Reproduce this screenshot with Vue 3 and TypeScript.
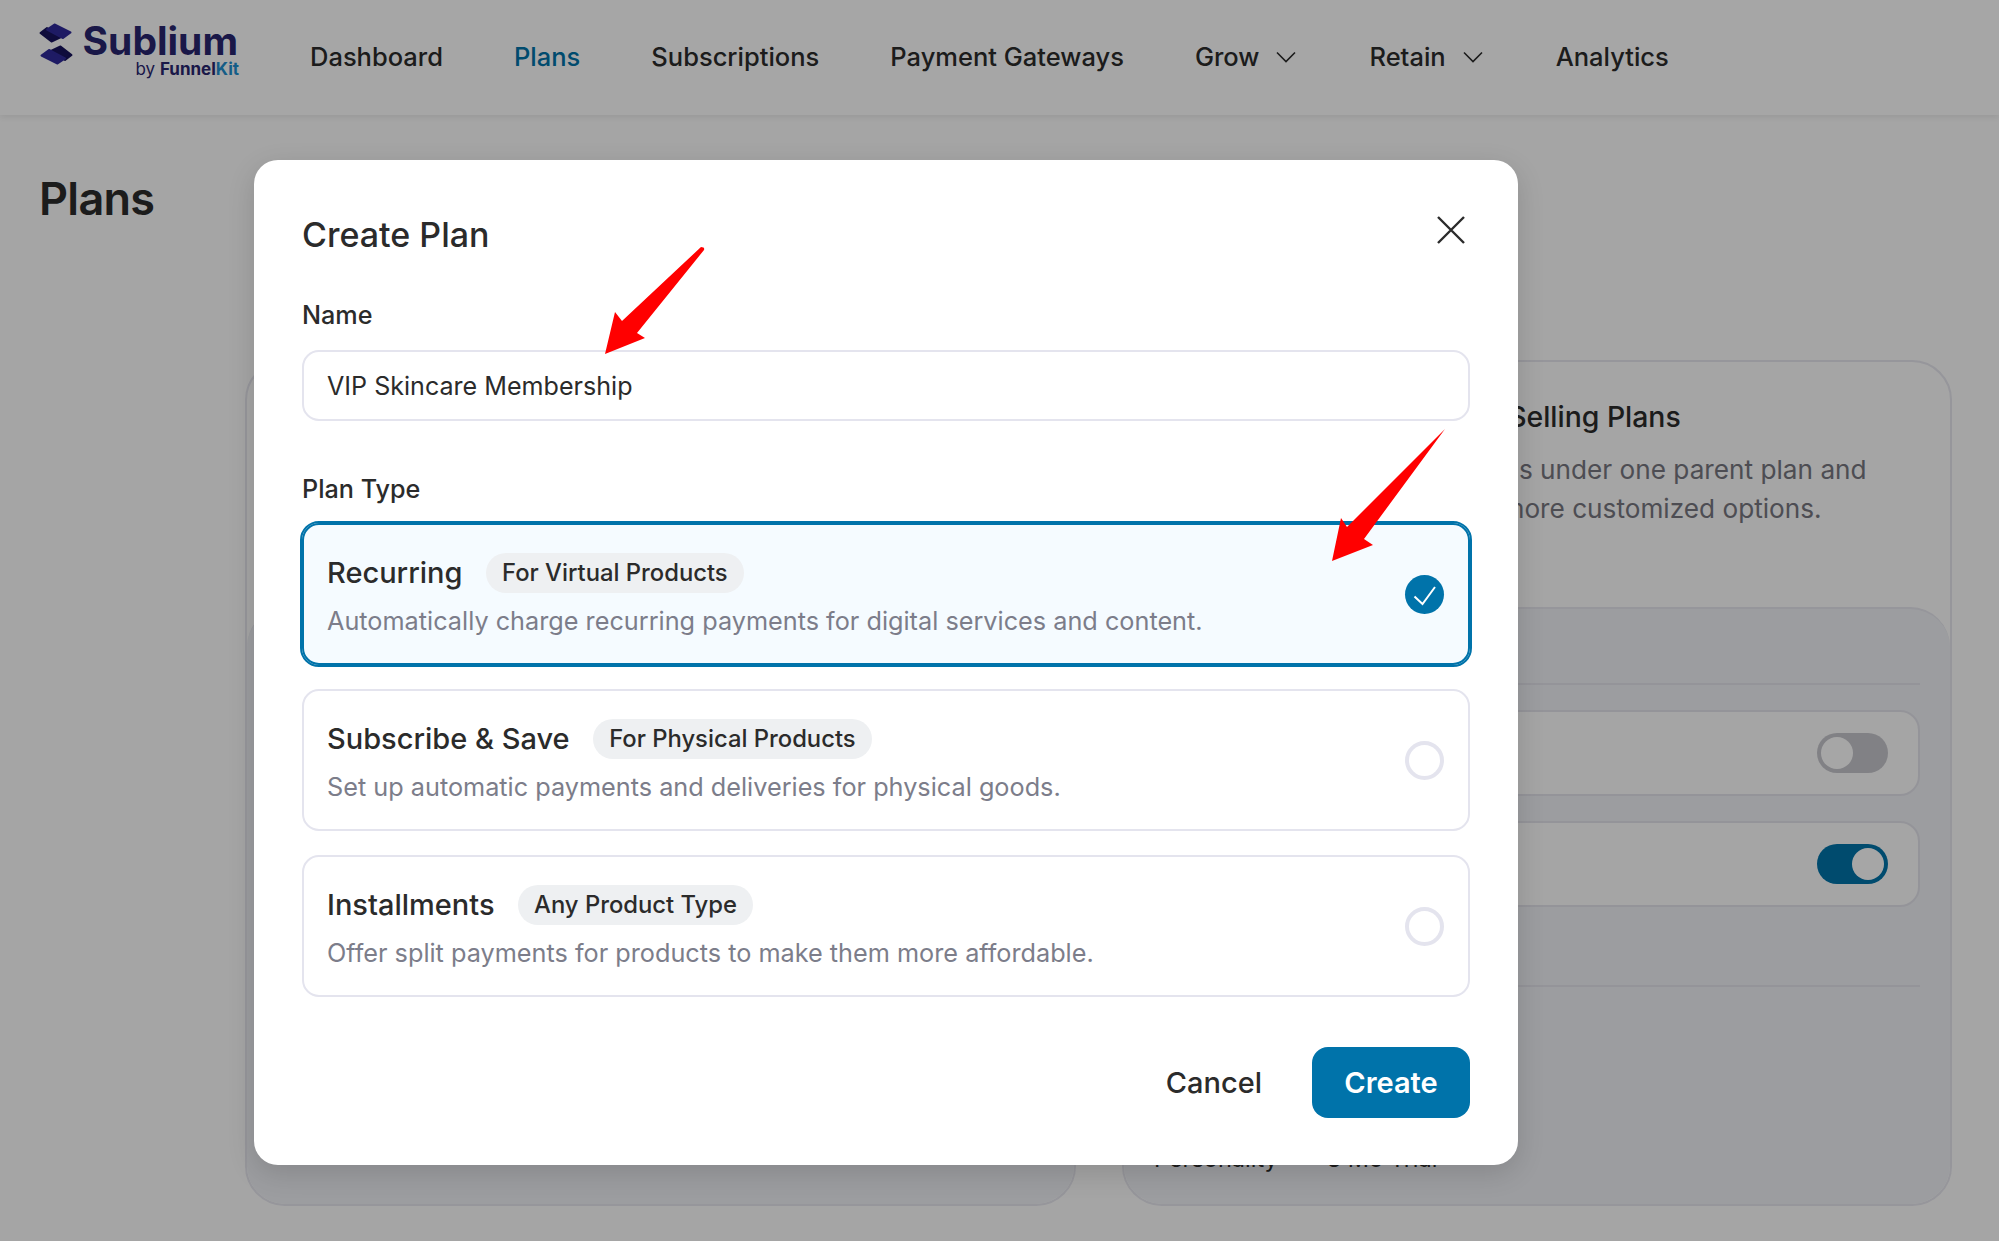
<script setup lang="ts">
import { ref } from 'vue'

interface PlanType {
  id: string
  title: string
  badge: string
  description: string
}

const navItems = [
  { label: 'Dashboard' },
  { label: 'Plans', active: true },
  { label: 'Subscriptions' },
  { label: 'Payment Gateways' },
  { label: 'Grow', menu: true },
  { label: 'Retain', menu: true },
  { label: 'Analytics' },
]

const planTypes: PlanType[] = [
  {
    id: 'recurring',
    title: 'Recurring',
    badge: 'For Virtual Products',
    description: 'Automatically charge recurring payments for digital services and content.',
  },
  {
    id: 'subscribe',
    title: 'Subscribe & Save',
    badge: 'For Physical Products',
    description: 'Set up automatic payments and deliveries for physical goods.',
  },
  {
    id: 'installments',
    title: 'Installments',
    badge: 'Any Product Type',
    description: 'Offer split payments for products to make them more affordable.',
  },
]

const planName = ref('VIP Skincare Membership')
const selected = ref('recurring')
</script>

<template>
  <div class="page">
    <header class="topbar">
      <div class="logo">
        <svg class="logo-mark" viewBox="0 0 34 42" width="34" height="42">
          <g stroke-width="2" stroke-linejoin="round">
            <path d="M8 5 L1.5 10 L12.5 18.5 L22 14 Z" fill="#17135c" stroke="#17135c" />
            <path d="M15.5 1.5 L31.5 9.5 L24 15 L8 6.5 Z" fill="#2f2a9a" stroke="#2f2a9a" />
            <path d="M26 37 L32.5 32 L21.5 23.5 L12 28 Z" fill="#17135c" stroke="#17135c" />
            <path d="M18.5 40.5 L2.5 32.5 L10 27 L26 35.5 Z" fill="#2f2a9a" stroke="#2f2a9a" />
          </g>
        </svg>
        <div class="logo-text">
          <span class="logo-name">Sublium</span>
          <span class="logo-by">by <b>Funnel<i>Kit</i></b></span>
        </div>
      </div>
      <nav class="nav">
        <a v-for="item in navItems" :key="item.label" class="nav-item" :class="{ active: item.active }">
          {{ item.label }}
          <svg v-if="item.menu" class="chevron" viewBox="0 0 20 12" width="20" height="12">
            <path d="M1 1.5 L10 10.5 L19 1.5" fill="none" stroke="currentColor" stroke-width="1.6" />
          </svg>
        </a>
      </nav>
    </header>

    <main class="content">
      <h1 class="page-title">Plans</h1>
      <div class="cards">
        <section class="card">
          <div class="card-top"></div>
          <div class="card-body"></div>
        </section>
        <section class="card">
          <div class="card-top">
            <h2>Sell More Through Varied Selling Plans</h2>
            <p>Combine multiple selling plans under one parent plan and<br />offering your customers far more customized options.</p>
          </div>
          <div class="card-body">
            <div class="body-head"></div>
            <div class="option-row"><span class="toggle"></span></div>
            <div class="option-row"><span class="toggle on"></span></div>
            <div class="body-rule"></div>
            <div class="trial-row"><span>Personality</span><span>3 Mo Trial</span></div>
          </div>
        </section>
      </div>
    </main>

    <div class="overlay"></div>

    <div class="modal">
      <div class="modal-head">
        <h2>Create Plan</h2>
        <svg class="close" viewBox="0 0 28 28" width="28" height="28">
          <path d="M1 1 L27 27 M27 1 L1 27" fill="none" stroke="#2b2b2b" stroke-width="2.4" />
        </svg>
      </div>

      <label class="field-label name-label">Name</label>
      <input v-model="planName" class="name-input" type="text" />

      <div class="field-label type-label">Plan Type</div>
      <div class="plan-list">
        <div
          v-for="plan in planTypes"
          :key="plan.id"
          class="plan"
          :class="{ selected: selected === plan.id }"
          @click="selected = plan.id"
        >
          <div class="plan-info">
            <div class="plan-title">
              <span class="plan-name">{{ plan.title }}</span>
              <span class="badge">{{ plan.badge }}</span>
            </div>
            <div class="plan-desc">{{ plan.description }}</div>
          </div>
          <span class="radio">
            <svg v-if="selected === plan.id" viewBox="0 0 39 39" width="39" height="39">
              <path d="M9.5 21.5 L17.5 29 L30 12" fill="none" stroke="#fff" stroke-width="2" />
            </svg>
          </span>
        </div>
      </div>

      <div class="modal-foot">
        <button class="btn-cancel">Cancel</button>
        <button class="btn-create">Create</button>
      </div>
    </div>

    <svg class="arrows" viewBox="0 0 1999 1241" width="1999" height="1241">
      <path d="M701 247 Q705 247 704 250 L637 333 L645 338 L605 354 L615 312 L622 321 Z" fill="#ff0000" />
      <path d="M1445 429 L1364 539 L1373 545 L1332 561 L1341 518 L1347 527 Z" fill="#ff0000" />
    </svg>
  </div>
</template>

<style>
html,
body {
  margin: 0;
  background: #fdfdfd;
}
</style>

<style scoped>
.page {
  position: relative;
  width: 1999px;
  height: 1241px;
  overflow: hidden;
  background: #fdfdfd;
  color: #2b2b2b;
  font-family: Inter, "Liberation Sans", sans-serif;
}

.topbar {
  display: flex;
  align-items: center;
  height: 115px;
  padding-left: 39px;
  background: #fff;
  box-shadow: 0 2px 6px rgba(0, 0, 0, 0.08);
}

.logo {
  display: flex;
  align-items: flex-start;
  gap: 12px;
  width: 271px;
  margin-top: -13px;
}

.logo-mark {
  flex: none;
}

.logo-text {
  display: flex;
  flex-direction: column;
  align-items: flex-end;
  width: 154px;
}

.logo-name {
  margin-right: 1px;
  font-size: 39px;
  line-height: 36px;
  font-weight: 700;
  color: #29266f;
}

.logo-by {
  margin-top: 0;
  font-size: 17px;
  line-height: 20px;
  color: #29266f;
}

.logo-by b {
  font-weight: 700;
}

.logo-by i {
  font-style: normal;
  color: #1f8fd0;
}

.nav {
  display: flex;
  align-items: center;
  gap: 71px;
  padding-bottom: 2px;
}

.nav-item {
  display: flex;
  align-items: center;
  gap: 17px;
  font-size: 25.5px;
  font-weight: 500;
  color: #2b2b2b;
}

.nav-item.active {
  color: #0073aa;
}

.chevron {
  margin-right: 2px;
}

.content {
  padding: 0 48px 0 39px;
}

.page-title {
  margin: 54px 0 0;
  font-size: 45px;
  line-height: 60px;
  font-weight: 600;
  letter-spacing: -0.7px;
}

.cards {
  display: grid;
  grid-template-columns: 831px 830px;
  gap: 46px;
  margin: 131px 0 0 206px;
  width: 1707px;
}

.card {
  display: flex;
  flex-direction: column;
  height: 846px;
  border: 2px solid #e6e6ee;
  border-radius: 40px;
  box-sizing: border-box;
  overflow: hidden;
  background: #fdfdfd;
}

.card-top {
  height: 245px;
  padding: 36px 32px 0;
  box-sizing: border-box;
}

.card-top h2 {
  margin: 0;
  font-size: 28.4px;
  line-height: 38px;
  font-weight: 500;
  white-space: nowrap;
}

.card-top p {
  margin: 14px 0 0;
  font-size: 26.2px;
  line-height: 39px;
  color: #777780;
  white-space: nowrap;
}

.card-body {
  flex: 1;
  padding: 0 30px;
  background: #f0f2f6;
  border-top: 2px solid #e6e6ee;
  border-radius: 40px 40px 0 0;
}

.body-head {
  height: 74px;
  border-bottom: 2px solid #e4e4ec;
}

.option-row {
  display: flex;
  align-items: center;
  justify-content: flex-end;
  height: 86px;
  margin-top: 25px;
  padding-right: 30px;
  border: 2px solid #e4e4ec;
  border-radius: 20px;
  box-sizing: border-box;
  background: #fdfdfd;
}

.toggle {
  display: flex;
  align-items: center;
  width: 71px;
  height: 40px;
  padding: 4px;
  box-sizing: border-box;
  border-radius: 20px;
  background: #c7c7cd;
}

.toggle::after {
  content: "";
  width: 32px;
  height: 32px;
  border-radius: 50%;
  background: #fff;
}

.toggle.on {
  justify-content: flex-end;
  background: #0073aa;
}

.body-rule {
  margin-top: 78px;
  border-top: 2px solid #e4e4ec;
}

.trial-row {
  display: flex;
  gap: 49px;
  margin-top: 157px;
  font-size: 23.5px;
  line-height: 30px;
}

.overlay {
  position: absolute;
  inset: 0;
  background: rgba(0, 0, 0, 0.35);
}

.modal {
  position: absolute;
  left: 254px;
  top: 160px;
  width: 1264px;
  height: 1005px;
  padding: 0 48px;
  box-sizing: border-box;
  background: #fff;
  border-radius: 24px;
  box-shadow: 0 8px 28px rgba(0, 0, 0, 0.14);
}

.modal-head {
  display: flex;
  align-items: center;
  justify-content: space-between;
  height: 120px;
  padding: 28px 5px 0 0;
  box-sizing: border-box;
}

.modal-head h2 {
  margin: 0;
  font-size: 34px;
  font-weight: 500;
}

.close {
  margin-top: -9px;
}

.field-label {
  display: block;
  font-size: 25.2px;
  line-height: 32px;
  font-weight: 500;
}

.name-label {
  margin-top: 19px;
}

.name-input {
  display: block;
  width: 100%;
  height: 71px;
  margin-top: 19px;
  padding: 0 23px;
  box-sizing: border-box;
  border: 2px solid #e4e4ee;
  border-radius: 17px;
  font: inherit;
  font-size: 25.1px;
  color: #2b2b2b;
  outline: none;
}

.type-label {
  margin-top: 52px;
}

.plan-list {
  display: flex;
  flex-direction: column;
  gap: 24px;
  margin-top: 18px;
}

.plan {
  position: relative;
  display: flex;
  align-items: center;
  justify-content: space-between;
  height: 142px;
  padding: 1px 24px 0 23px;
  box-sizing: border-box;
  border: 2px solid #e4e4ee;
  border-radius: 17px;
}

.plan.selected {
  background: #f5fbff;
  border-color: #0073aa;
  outline: 2px solid #0073aa;
}

.plan-title {
  display: flex;
  align-items: center;
  gap: 23px;
}

.plan-name {
  font-size: 29px;
  font-weight: 500;
}

.badge {
  display: flex;
  align-items: center;
  height: 40px;
  padding: 0 16.5px;
  border-radius: 20px;
  background: #eef0f2;
  font-size: 23.8px;
  font-weight: 500;
}

.plan-desc {
  margin-top: 12px;
  font-size: 25.25px;
  line-height: 32px;
  color: #7c7d8a;
}

.radio {
  flex: none;
  width: 39px;
  height: 39px;
  box-sizing: border-box;
  border: 4px solid #e4e4ee;
  border-radius: 50%;
}

.plan.selected .radio {
  border: none;
  background: #0073aa;
}

.plan.selected .radio svg {
  display: block;
}

.modal-foot {
  display: flex;
  align-items: center;
  justify-content: flex-end;
  gap: 50px;
  margin-top: 50px;
}

.modal-foot button {
  padding: 0;
  border: none;
  background: none;
  font: inherit;
  font-size: 29px;
  font-weight: 500;
  cursor: pointer;
}

.btn-cancel {
  color: #2b2b2b;
}

.modal-foot .btn-create {
  width: 158px;
  height: 71px;
  border-radius: 16px;
  background: #0073aa;
  color: #fff;
  font-weight: 600;
}

.arrows {
  position: absolute;
  inset: 0;
  pointer-events: none;
}
</style>
